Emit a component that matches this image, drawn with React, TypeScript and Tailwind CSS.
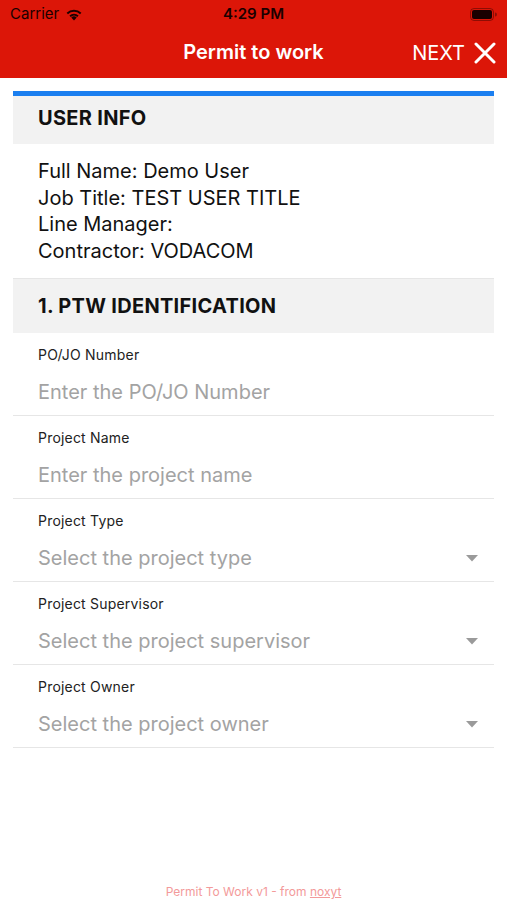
import React from 'react';

const font = { fontFamily: 'Inter, "Liberation Sans", Arial, sans-serif' };

function Wifi() {
  return (
    <svg width="18" height="13" viewBox="0 0 18 13" className="ml-[6px]">
      <path d="M9 12.5 L6.3 9.6 A3.8 3.8 0 0 1 11.7 9.6 Z" fill="#1a0000" />
      <path d="M4.4 7.6 A6.6 6.6 0 0 1 13.6 7.6 L12.3 9 A4.8 4.8 0 0 0 5.7 9 Z" fill="#1a0000" />
      <path d="M1.6 4.8 A10.5 10.5 0 0 1 16.4 4.8 L15 6.2 A8.5 8.5 0 0 0 3 6.2 Z" fill="#1a0000" />
    </svg>
  );
}

function Battery() {
  return (
    <svg width="27" height="13" viewBox="0 0 27 13">
      <rect x="0.5" y="0.5" width="23" height="12" rx="3.5" fill="none" stroke="#1a0000" strokeOpacity="0.4" />
      <rect x="2" y="2" width="20" height="9" rx="2" fill="#1a0000" />
      <path d="M25 4.5 A2 2 0 0 1 25 8.5 Z" fill="#1a0000" fillOpacity="0.4" />
    </svg>
  );
}

function Caret() {
  return (
    <svg width="12" height="7" viewBox="0 0 12 7">
      <path d="M0 0 L12 0 L6 6.5 Z" fill="#9a9a9a" />
    </svg>
  );
}

function SectionHeader({ title }: { title: string }) {
  return (
    <div className="bg-[#f2f2f2] px-[25px] h-[48px] flex items-center">
      <span className="text-[20px] leading-[24px] font-bold tracking-[0.3px] text-[#111] -mt-[4px]">{title}</span>
    </div>
  );
}

function Field({ label, placeholder, select }: { label: string; placeholder: string; select?: boolean }) {
  return (
    <div className="border-b border-[#e6e6e6] pl-[25px] pr-[16px] pt-[14px] h-[83px]">
      <div className="text-[14px] leading-[16px] tracking-[0.2px] text-[#222]">{label}</div>
      <div className="flex items-center justify-between mt-[15px]">
        <span className="text-[20px] leading-[28px] text-[#a3a3a3]">{placeholder}</span>
        {select && <Caret />}
      </div>
    </div>
  );
}

export default function App() {
  return (
    <div className="min-h-screen flex flex-col bg-white" style={font}>
      <div className="bg-[#dc1608] h-[78px] flex flex-col">
        <div className="h-[28px] flex items-center justify-between px-[10px] relative">
          <div className="flex items-center text-[15px] text-[#1a0000]">
            Carrier
            <Wifi />
          </div>
          <span className="absolute left-1/2 -translate-x-1/2 text-[15px] font-semibold text-[#1a0000]">4:29 PM</span>
          <Battery />
        </div>
        <div className="flex-1 flex items-center justify-center relative">
          <span className="text-[20px] font-semibold text-white -mt-[2px]">Permit to work</span>
          <div className="absolute right-[11px] flex items-center gap-[9px]">
            <span className="text-[20px] text-white">NEXT</span>
            <svg width="22" height="22" viewBox="0 0 22 22">
              <path d="M2 2 L20 20 M20 2 L2 20" stroke="white" strokeWidth="3" strokeLinecap="round" />
            </svg>
          </div>
        </div>
      </div>

      <div className="px-[13px] pt-[13px]">
        <div className="h-[5px] bg-[#1b7ff0]" />
        <SectionHeader title="USER INFO" />
        <div className="px-[25px] py-[14px] text-[20px] leading-[26.5px] text-[#111] border-b border-[#e6e6e6]">
          <div>Full Name: Demo User</div>
          <div>Job Title: TEST USER TITLE</div>
          <div>Line Manager:</div>
          <div>Contractor: VODACOM</div>
        </div>
        <div className="h-[54px] bg-[#f2f2f2] px-[25px] flex items-center">
          <span className="text-[20px] font-bold tracking-[0.3px] text-[#111]">1. PTW IDENTIFICATION</span>
        </div>
        <Field label="PO/JO Number" placeholder="Enter the PO/JO Number" />
        <Field label="Project Name" placeholder="Enter the project name" />
        <Field label="Project Type" placeholder="Select the project type" select />
        <Field label="Project Supervisor" placeholder="Select the project supervisor" select />
        <Field label="Project Owner" placeholder="Select the project owner" select />
      </div>

      <div className="mt-auto text-center text-[12px] leading-[16px] text-[#f39a9a]">
        Permit To Work v1 - from <span className="underline">noxyt</span>
      </div>
    </div>
  );
}
